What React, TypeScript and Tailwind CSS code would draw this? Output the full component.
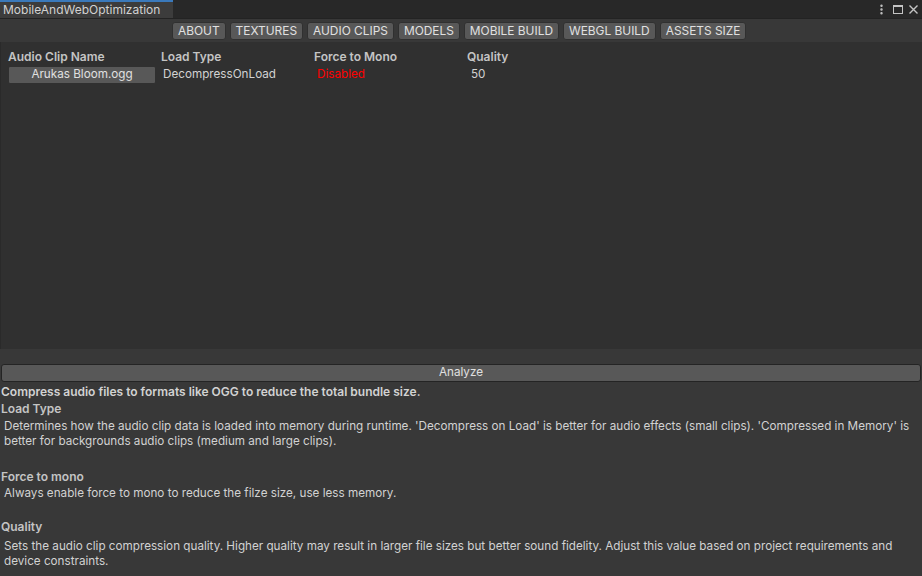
import { EllipsisVertical } from "lucide-react";

const tabs = ["ABOUT", "TEXTURES", "AUDIO CLIPS", "MODELS", "MOBILE BUILD", "WEBGL BUILD", "ASSETS SIZE"];

function ToolButton({ label }: { label: string }) {
  return (
    <div className="h-[18px] px-[5px] flex items-center bg-[#585858] border border-[#303030] rounded-[3px] text-[11.9px] text-[#e0e0e0] leading-none">
      {label}
    </div>
  );
}

export default function App() {
  return (
    <div
      className="w-[922px] h-[576px] bg-[#383838] text-[#d2d2d2] text-[11.7px] overflow-hidden flex flex-col"
      style={{ fontFamily: "Inter, 'Noto Sans', sans-serif" }}
    >
      {/* title bar */}
      <div className="h-[19px] bg-[#282828] flex items-stretch border-b border-[#232323]">
        <div className="w-[173px] bg-[#3c3c3c] border-t-2 border-[#3a79bb] flex items-center pl-[3px] text-[12px] text-[#d2d2d2]">
          MobileAndWebOptimization
        </div>
        <div className="flex-1" />
        <div className="flex items-center gap-[5px] pr-[3px] text-[#c4c4c4]">
          <EllipsisVertical size={13} strokeWidth={2.5} />
          <div className="w-[10px] h-[9px] border border-[#c4c4c4] border-t-2" />
          <svg width="11" height="11" viewBox="0 0 11 11">
            <path d="M1.5 1.5 L9.5 9.5 M9.5 1.5 L1.5 9.5" stroke="#c4c4c4" strokeWidth="1.4" />
          </svg>
        </div>
      </div>

      {/* toolbar */}
      <div className="h-[23px] flex items-center pl-[172px] gap-[4px]">
        {tabs.map((t) => (
          <ToolButton key={t} label={t} />
        ))}
      </div>

      {/* table panel */}
      <div className="h-[307px] bg-[#303030] border-l border-[#2a2a2a] pt-[6px]">
        <div className="grid grid-cols-[153px_153px_153px_153px] pl-[7px] font-semibold text-[12px] text-[#c4c4c4] h-[17px] items-center">
          <div>Audio Clip Name</div>
          <div>Load Type</div>
          <div>Force to Mono</div>
          <div>Quality</div>
        </div>
        <div className="grid grid-cols-[153px_153px_153px_153px] pl-[7px] h-[19px] items-center">
          <div className="w-[148px] h-[18px] bg-[#585858] border border-[#303030] rounded-[2px] flex items-center justify-center text-[#e0e0e0]">
            Arukas Bloom.ogg
          </div>
          <div className="pl-[2px]">DecompressOnLoad</div>
          <div className="pl-[3px] text-[#ff0000]">Disabled</div>
          <div className="pl-[4px]">50</div>
        </div>
      </div>

      {/* analyze */}
      <div className="pt-[15px] px-[1px]">
        <div className="h-[18px] bg-[#585858] border border-[#242424] rounded-[3px] flex items-center justify-center text-[#e0e0e0]">
          Analyze
        </div>
      </div>

      {/* help text */}
      <div className="px-[1px] leading-[15px]">
        <div className="font-semibold text-[12px] text-[#d2d2d2] h-[18px] flex items-center">
          Compress audio files to formats like OGG to reduce the total bundle size.
        </div>
        <div className="font-semibold text-[12px] text-[#c4c4c4] h-[17px] flex items-center">Load Type</div>
        <div className="pl-[3px] pr-[4px] pt-[2px]">
          Determines how the audio clip data is loaded into memory during runtime. 'Decompress on Load' is better for audio effects (small clips). 'Compressed in Memory' is better for backgrounds audio clips (medium and large clips).
        </div>
        <div className="h-[18px]" />
        <div className="font-semibold text-[12px] text-[#c4c4c4] h-[18px] flex items-center">Force to mono</div>
        <div className="pl-[3px] h-[17px] flex items-center">
          Always enable force to mono to reduce the filze size, use less memory.
        </div>
        <div className="h-[16px]" />
        <div className="font-semibold text-[12px] text-[#c4c4c4] h-[17px] flex items-center">Quality</div>
        <div className="pl-[3px] pr-[4px] pt-[4px]">
          Sets the audio clip compression quality. Higher quality may result in larger file sizes but better sound fidelity. Adjust this value based on project requirements and device constraints.
        </div>
      </div>
    </div>
  );
}
